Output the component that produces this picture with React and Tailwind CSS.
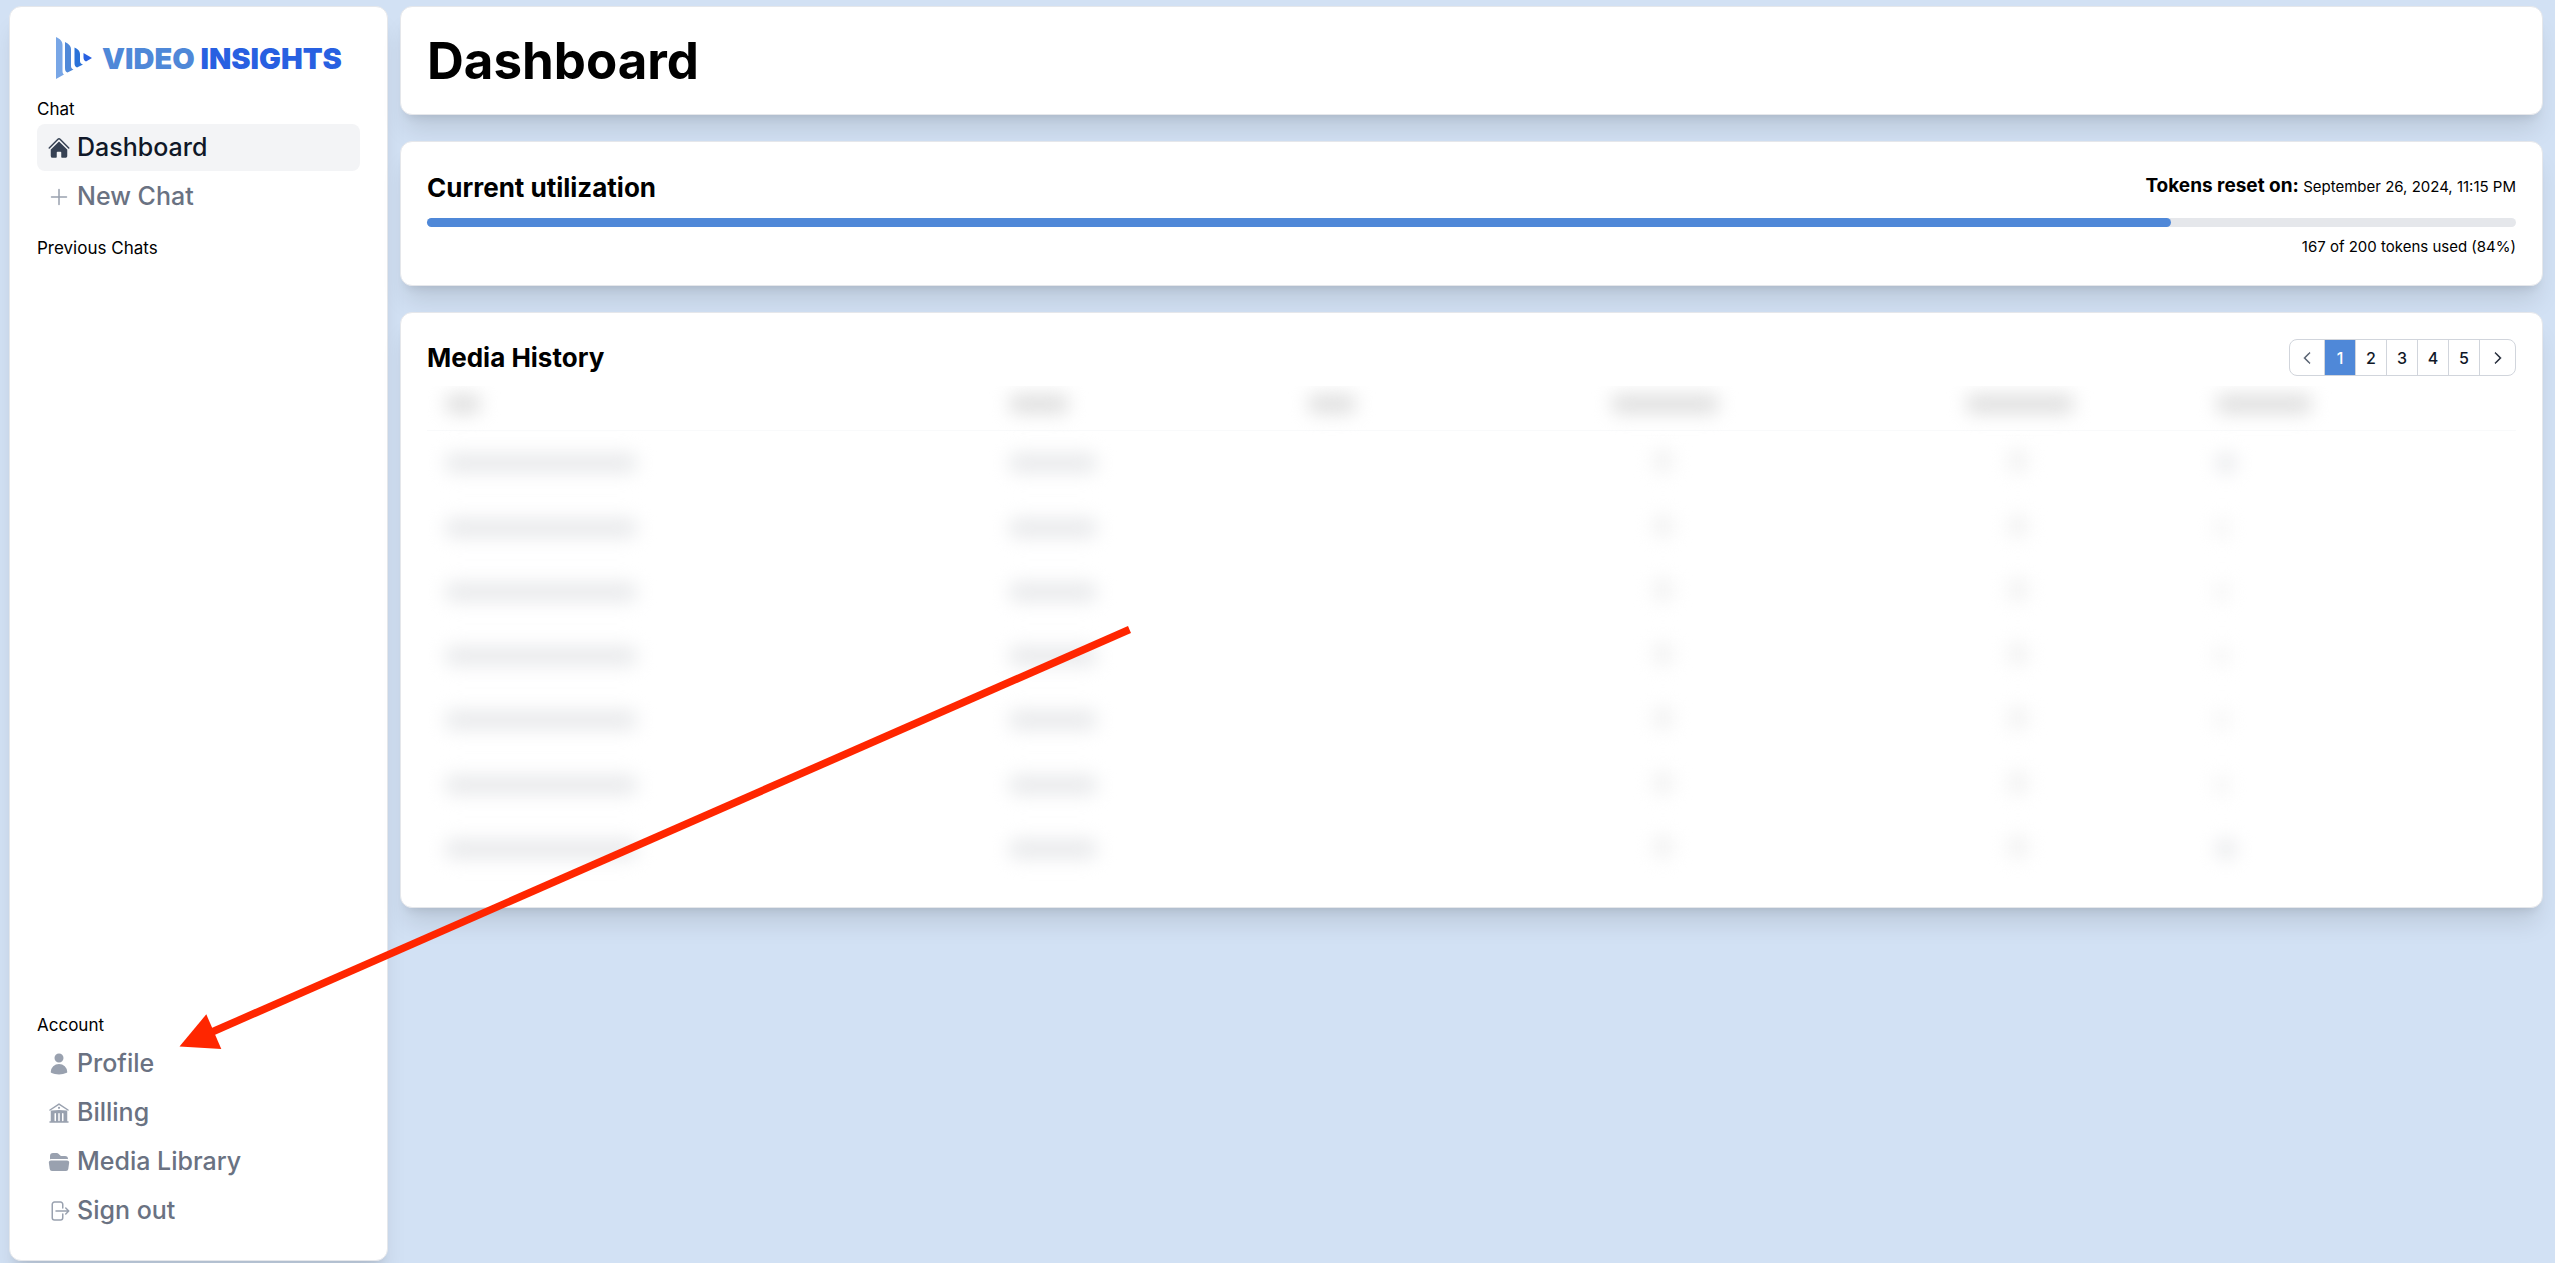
import React, { useState } from "react";
import clsx from "clsx";
import {
  HiBuildingLibrary,
  HiChevronLeft,
  HiChevronRight,
  HiFolderOpen,
  HiHome,
  HiOutlineArrowRightOnRectangle,
  HiOutlinePlus,
  HiUser,
} from "react-icons/hi2";

const TOKENS_USED = 167;
const TOKENS_TOTAL = 200;

const chatLinks = [
  { name: "Dashboard", icon: HiHome },
  { name: "New Chat", icon: HiOutlinePlus },
];

const accountLinks = [
  { name: "Profile", icon: HiUser },
  { name: "Billing", icon: HiBuildingLibrary },
  { name: "Media Library", icon: HiFolderOpen },
  { name: "Sign out", icon: HiOutlineArrowRightOnRectangle },
];

const rows = [
  { id: 1, wide: true },
  { id: 2, wide: false },
  { id: 3, wide: false },
  { id: 4, wide: false },
  { id: 5, wide: false },
  { id: 6, wide: false },
  { id: 7, wide: true },
];

const Logo = () => (
  <a href="#" className="flex items-center gap-[10px] pl-[19px] whitespace-nowrap">
    <svg width="36" height="42" viewBox="0 0 36 42" aria-hidden="true">
      <path d="M0 0 C4 2 6.500 4 6.500 8 V34 C6.500 36 7 37 8 37.500 L0 42 Z" fill="#78a6e6" />
      <path d="M9 5 C13 7 15 9 15 12 V29 C15 31 16 32 17.500 32.500 L11.500 35.500 C10 35 9 34 9 31 Z" fill="#4f88d8" />
      <path d="M18.500 10.500 C22 12 24 14 24 17 V24 C24 26 25 27 27 27.500 L21 30.500 C19 30 18.500 28 18.500 26 Z" fill="#2a72d8" />
      <path d="M27.500 16 L36 21 L30 24.500 C28 23.500 27.500 22 27.500 20 Z" fill="#2860e1" />
    </svg>
    <span className="pt-[2px] text-[29px] leading-8 font-black">
      <span className="text-[#4f88d8]">VIDEO</span>{" "}
      <span className="text-[#2860e1]">INSIGHTS</span>
    </span>
  </a>
);

const NavItem = ({ item, active, onClick }) => {
  const Icon = item.icon;
  return (
    <li>
      <a
        href="#"
        onClick={onClick}
        className={clsx(
          "flex h-[47px] items-center gap-[6px] rounded-lg px-[10px] text-[25px] font-medium",
          active ? "bg-gray-100 text-gray-900" : "text-gray-500"
        )}
      >
        <Icon
          className={clsx("size-6", active ? "text-gray-700" : "text-gray-400")}
        />
        <span>{item.name}</span>
      </a>
    </li>
  );
};

const Sidebar = () => {
  const [current, setCurrent] = useState("Dashboard");

  const renderLinks = (links) => (
    <ul className="flex flex-col gap-[2px]">
      {links.map((item) => (
        <NavItem
          key={item.name}
          item={item}
          active={current === item.name}
          onClick={() => setCurrent(item.name)}
        />
      ))}
    </ul>
  );

  return (
    <aside className="flex w-[379px] shrink-0 flex-col justify-between rounded-xl border border-gray-200 bg-white px-[27px] pt-[30px] pb-[26px] shadow-xl">
      <nav>
        <Logo />
        <p className="mt-[18px] mb-[3px] text-[17px] leading-6">Chat</p>
        {renderLinks(chatLinks)}
        <p className="mt-4 text-[17px] leading-6">Previous Chats</p>
      </nav>
      <nav>
        <p className="mb-[3px] text-[17px] leading-6">Account</p>
        {renderLinks(accountLinks)}
      </nav>
    </aside>
  );
};

const Card = ({ children }) => (
  <section className="rounded-xl border border-gray-200 bg-white p-[26px] shadow-xl">
    {children}
  </section>
);

const Utilization = () => {
  const percent = (TOKENS_USED / TOKENS_TOTAL) * 100;
  return (
    <Card>
      <div className="flex h-10 items-start justify-between">
        <h2 className="text-[26px] leading-10 font-bold">
          Current utilization
        </h2>
        <p className="text-[15px] leading-9">
          <span className="text-[19px] font-bold">Tokens reset on:</span>{" "}
          September 26, 2024, 11:15 PM
        </p>
      </div>
      <div className="mt-[10px] h-[9px] rounded-full bg-gray-200">
        <div
          className="h-full rounded-full bg-[#4f88d8]"
          style={{ width: `${percent}%` }}
        />
      </div>
      <p className="mt-2 text-right text-[15px] leading-6">
        {TOKENS_USED} of {TOKENS_TOTAL} tokens used ({Math.round(percent)}%)
      </p>
    </Card>
  );
};

const Pagination = () => {
  const [page, setPage] = useState(1);
  return (
    <div className="flex h-[37px] divide-x divide-gray-300 overflow-hidden rounded-lg border border-gray-300 text-base font-medium text-gray-900">
      <button
        aria-label="Previous page"
        className="flex w-[35px] items-center justify-center text-gray-600"
        onClick={() => setPage(Math.max(1, page - 1))}
      >
        <HiChevronLeft className="size-4 stroke-1" />
      </button>
      {[1, 2, 3, 4, 5].map((n) => (
        <button
          key={n}
          onClick={() => setPage(n)}
          className={clsx("w-[31px]", n === page && "bg-[#4f88d8] text-white")}
        >
          {n}
        </button>
      ))}
      <button
        aria-label="Next page"
        className="flex w-[35px] items-center justify-center"
        onClick={() => setPage(Math.min(5, page + 1))}
      >
        <HiChevronRight className="size-4 stroke-1" />
      </button>
    </div>
  );
};

const Redacted = ({ className }) => (
  <div className={clsx("rounded-lg blur-[9px]", className)} />
);

const MediaHistory = () => (
  <Card>
    <div className="flex items-center justify-between">
      <h2 className="text-[26px] leading-[37px] font-bold">Media History</h2>
      <Pagination />
    </div>
    <div className="mt-[10px] overflow-hidden">
      <table className="h-[495px] w-full table-fixed">
        <colgroup>
          <col className="w-[27%]" />
          <col className="w-[14.3%]" />
          <col className="w-[14.5%]" />
          <col className="w-[17%]" />
          <col className="w-[12%]" />
          <col />
        </colgroup>
        <thead>
          <tr className="h-[44px] border-b border-gray-50 align-top">
            <th className="px-[18px] pt-2"><Redacted className="h-5 w-9 bg-[#e0e0e0]" /></th>
            <th className="px-[18px] pt-2"><Redacted className="h-5 w-15 bg-[#e0e0e0]" /></th>
            <th className="px-[18px] pt-2"><Redacted className="h-5 w-12 bg-[#e0e0e0]" /></th>
            <th className="px-[18px] pt-2"><Redacted className="h-5 w-27 bg-[#e0e0e0]" /></th>
            <th className="px-[18px] pt-2"><Redacted className="h-5 w-27 bg-[#e0e0e0]" /></th>
            <th className="px-[18px] pt-2"><Redacted className="h-5 w-24 bg-[#e0e0e0]" /></th>
          </tr>
        </thead>
        <tbody>
          {rows.map((row) => (
            <tr key={row.id}>
              <td className="px-[18px]"><Redacted className="h-5 w-48 bg-[#e9eaec]" /></td>
              <td className="px-[18px]"><Redacted className="h-5 w-[88px] bg-[#e9eaec]" /></td>
              <td className="px-[18px]" />
              <td className="px-[18px] pb-1"><Redacted className="ml-[42px] h-6 w-5 bg-[#f2f2f2]" /></td>
              <td className="px-[18px] pb-1"><Redacted className="ml-[42px] h-6 w-5 bg-[#f2f2f2]" /></td>
              <td className="px-[18px]">
                <Redacted className={row.wide ? "h-5 w-5 bg-[#e9eaec]" : "h-5 w-3 bg-[#f2f2f2]"} />
              </td>
            </tr>
          ))}
        </tbody>
      </table>
    </div>
  </Card>
);

const Arrow = () => (
  <svg
    className="pointer-events-none absolute top-[620px] left-[170px]"
    width="970"
    height="440"
    viewBox="170 620 970 440"
    aria-hidden="true"
  >
    <path d="M1129.500 629.500 L212 1032" stroke="#ff2600" strokeWidth="7.500" />
    <path d="M179.500 1046.500 L206.300 1014.300 L221.300 1049 Z" fill="#ff2600" />
  </svg>
);

const App = () => {
  return (
    <div className="relative flex min-h-screen gap-3 bg-[#d2e1f4] pt-[6px] pr-3 pb-[2px] pl-[9px] font-['Inter',sans-serif] text-black">
      <Sidebar />
      <main className="flex min-w-0 flex-1 flex-col gap-[26px]">
        <Card>
          <h1 className="text-[51px] leading-[55px] font-bold">Dashboard</h1>
        </Card>
        <Utilization />
        <MediaHistory />
      </main>
      <Arrow />
    </div>
  );
};

export default App;
